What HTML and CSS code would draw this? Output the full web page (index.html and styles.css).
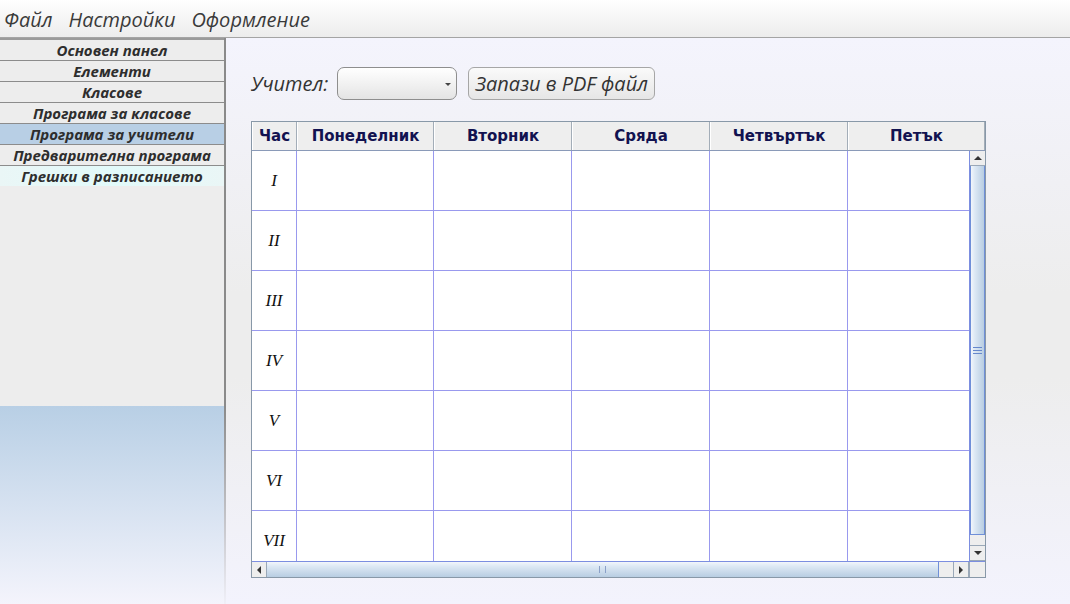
FILE: index.html
```html
<!DOCTYPE html>
<html lang="bg">
<head>
    <meta charset="UTF-8">
    <title>Програма за учители</title>
    <link rel="stylesheet" href="styles.css">
</head>
<body>
    <div class="menubar">
        <span class="menu-item">Файл</span>
        <span class="menu-item">Настройки</span>
        <span class="menu-item">Оформление</span>
    </div>
    <div class="main">
        <div class="sidebar">
            <div class="nav">
                <div class="nav-item">Основен панел</div>
                <div class="nav-item">Елементи</div>
                <div class="nav-item">Класове</div>
                <div class="nav-item">Програма за класове</div>
                <div class="nav-item active">Програма за учители</div>
                <div class="nav-item">Предварителна програма</div>
                <div class="nav-item errors">Грешки в разписанието</div>
            </div>
            <div class="nav-fill"></div>
            <div class="nav-bottom"></div>
        </div>
        <div class="content">
            <div class="toolbar">
                <span class="label">Учител:</span>
                <div class="combo"><span class="combo-arrow"></span></div>
                <button class="btn">Запази в PDF файл</button>
            </div>
            <div class="table-frame">
                <div class="thead">
                    <div class="th">Час</div>
                    <div class="th">Понеделник</div>
                    <div class="th">Вторник</div>
                    <div class="th">Сряда</div>
                    <div class="th">Четвъртък</div>
                    <div class="th">Петък</div>
                </div>
                <div class="body-wrap">
                    <div class="tbody">
                        <div class="tr"><div class="td num">I</div><div class="td"></div><div class="td"></div><div class="td"></div><div class="td"></div><div class="td"></div></div>
                        <div class="tr"><div class="td num">II</div><div class="td"></div><div class="td"></div><div class="td"></div><div class="td"></div><div class="td"></div></div>
                        <div class="tr"><div class="td num">III</div><div class="td"></div><div class="td"></div><div class="td"></div><div class="td"></div><div class="td"></div></div>
                        <div class="tr"><div class="td num">IV</div><div class="td"></div><div class="td"></div><div class="td"></div><div class="td"></div><div class="td"></div></div>
                        <div class="tr"><div class="td num">V</div><div class="td"></div><div class="td"></div><div class="td"></div><div class="td"></div><div class="td"></div></div>
                        <div class="tr"><div class="td num">VI</div><div class="td"></div><div class="td"></div><div class="td"></div><div class="td"></div><div class="td"></div></div>
                        <div class="tr"><div class="td num">VII</div><div class="td"></div><div class="td"></div><div class="td"></div><div class="td"></div><div class="td"></div></div>
                    </div>
                    <div class="vscroll">
                        <div class="sb-btn"><span class="tri up"></span></div>
                        <div class="vthumb"><span class="grip"></span></div>
                        <div class="sb-gap"></div>
                        <div class="sb-btn"><span class="tri down"></span></div>
                    </div>
                </div>
                <div class="hscroll-row">
                    <div class="hscroll">
                        <div class="sb-btn h"><span class="tri left"></span></div>
                        <div class="hthumb"><span class="hgrip"></span></div>
                        <div class="sb-btn h"></div>
                        <div class="sb-btn h"><span class="tri right"></span></div>
                    </div>
                    <div class="corner"></div>
                </div>
            </div>
        </div>
    </div>
</body>
</html>
```

FILE: styles.css
```css
body {
    margin: 0;
    width: 1070px;
    height: 604px;
    overflow: hidden;
    font-family: "Open Sans", "Noto Sans", sans-serif;
    background-color: #f3f3fb;
}
.menubar {
    height: 37px;
    border-bottom: 1px solid #a4a4a4;
    background: linear-gradient(#ffffff, #ececec);
    display: flex;
    align-items: center;
    padding-left: 4px;
    gap: 16px;
}
.menu-item {
    font-style: italic;
    font-size: 20px;
    color: #3a3a3a;
    padding-top: 2px;
}
.main {
    display: flex;
    height: 566px;
}
/* left navigation */
.sidebar {
    width: 224px;
    border-right: 2px solid #8a8a8a;
    border-image: linear-gradient(#8a8a8a 65%, #f0f0f8) 1;
    display: flex;
    flex-direction: column;
    background-color: #ededed;
}
.nav {
    border-top: 2px solid #9a9a9a;
}
.nav-item {
    height: 20px;
    line-height: 20px;
    border-bottom: 1px solid #8c8c8c;
    text-align: center;
    font-size: 15px;
    font-weight: bold;
    font-style: italic;
    color: #2e2e2e;
    background-color: #ededed;
    white-space: nowrap;
}
.nav-item.active {
    background-color: #b8cfe5;
}
.nav-item.errors {
    border-bottom: none;
    background: linear-gradient(90deg, #eaf6f6, #e2fafa 50%, #eaf6f6);
}
.nav-fill {
    height: 220px;
}
.nav-bottom {
    flex: 1;
    background: linear-gradient(#b8cfe5, #f4f4fc);
}
/* right panel */
.content {
    flex: 1;
    padding: 28px 0 0 25px;
    background: linear-gradient(#f4f4fd, #ededed 45%, #ededed 60%, #f3f3fd);
}
.toolbar {
    display: flex;
    align-items: center;
    height: 34px;
}
.label {
    font-style: italic;
    font-size: 20px;
    color: #333;
    margin-right: 9px;
}
.combo {
    width: 118px;
    height: 31px;
    border: 1px solid #8e8e8e;
    border-radius: 7px;
    background: linear-gradient(#ffffff, #e4e4e4);
    position: relative;
    margin-right: 11px;
}
.combo-arrow {
    position: absolute;
    right: 5px;
    top: 15px;
    border-left: 3px solid transparent;
    border-right: 3px solid transparent;
    border-top: 3px solid #444;
}
.btn {
    height: 33px;
    padding: 0 6px;
    border: 1px solid #a6a6a6;
    border-radius: 6px;
    background: linear-gradient(#fafafa, #e6e6e6);
    font-family: "Open Sans", "Noto Sans", sans-serif;
    font-style: italic;
    font-size: 20px;
    color: #333;
}
.table-frame {
    margin-top: 21px;
    width: 733px;
    border: 1px solid #8898a8;
    background-color: #ffffff;
}
.thead {
    display: grid;
    grid-template-columns: 45px 137px 138px 138px 138px 137px;
    height: 28px;
    background-color: #eeeeee;
    border-bottom: 1px solid #8a9ab8;
}
.th {
    border-left: 1px solid #ffffff;
    border-right: 1px solid #a3adb8;
    text-align: center;
    line-height: 28px;
    font-family: "DejaVu Sans", sans-serif;
    font-weight: bold;
    font-size: 15px;
    color: #121250;
}
.body-wrap {
    display: flex;
    height: 410px;
}
.tbody {
    width: 717px;
    height: 410px;
    overflow: hidden;
    border-right: 1px solid #7c8ee0;
}
.tr {
    display: grid;
    grid-template-columns: 45px 137px 138px 138px 138px 121px;
    height: 59px;
    border-bottom: 1px solid #9999ee;
}
.td {
    border-right: 1px solid #9999ee;
}
.td:last-child {
    border-right: none;
}
.num {
    display: flex;
    align-items: center;
    justify-content: center;
    font-family: "Liberation Serif", serif;
    font-style: italic;
    font-size: 17px;
    color: #111;
}
/* scrollbars */
.vscroll {
    width: 15px;
    display: flex;
    flex-direction: column;
    background-color: #eeeeee;
}
.sb-btn {
    height: 14px;
    display: flex;
    align-items: center;
    justify-content: center;
    background-color: #eeeeee;
    border-bottom: 1px solid #9aa8b8;
}
.vthumb {
    flex: 1;
    background: linear-gradient(90deg, #f2f6fb, #dce8f4 30%, #b8cde2);
    border: 1px solid #6f8fd8;
    border-top: none;
    display: flex;
    align-items: center;
    justify-content: center;
}
.grip {
    width: 9px;
    height: 5px;
    border-top: 1px solid #6688cc;
    border-bottom: 1px solid #6688cc;
    position: relative;
}
.grip::after {
    content: "";
    position: absolute;
    left: 0;
    right: 0;
    top: 2px;
    border-top: 1px solid #6688cc;
}
.sb-gap {
    height: 10px;
    border-bottom: 1px solid #9aa8b8;
}
.tri {
    width: 0;
    height: 0;
}
.tri.up {
    border-left: 4px solid transparent;
    border-right: 4px solid transparent;
    border-bottom: 4px solid #333;
}
.tri.down {
    border-left: 4px solid transparent;
    border-right: 4px solid transparent;
    border-top: 4px solid #333;
}
.tri.left {
    border-top: 4px solid transparent;
    border-bottom: 4px solid transparent;
    border-right: 4px solid #333;
}
.tri.right {
    border-top: 4px solid transparent;
    border-bottom: 4px solid transparent;
    border-left: 4px solid #333;
}
.hscroll-row {
    display: flex;
    height: 15px;
    border-top: 1px solid #7c8ee0;
}
.hscroll {
    width: 717px;
    display: flex;
}
.sb-btn.h {
    width: 14px;
    height: 15px;
    border-bottom: none;
    border-right: 1px solid #9aa8b8;
}
.hthumb {
    flex: 1;
    background: linear-gradient(#f2f6fb, #dce8f4 30%, #b8cde2);
    border-right: 1px solid #6f8fd8;
    display: flex;
    align-items: center;
    justify-content: center;
}
.hgrip {
    width: 5px;
    height: 7px;
    border-left: 1px solid #8aa0c8;
    border-right: 1px solid #8aa0c8;
}
.corner {
    flex: 1;
    background-color: #eeeeee;
    border-left: 1px solid #9aa8b8;
}
```
